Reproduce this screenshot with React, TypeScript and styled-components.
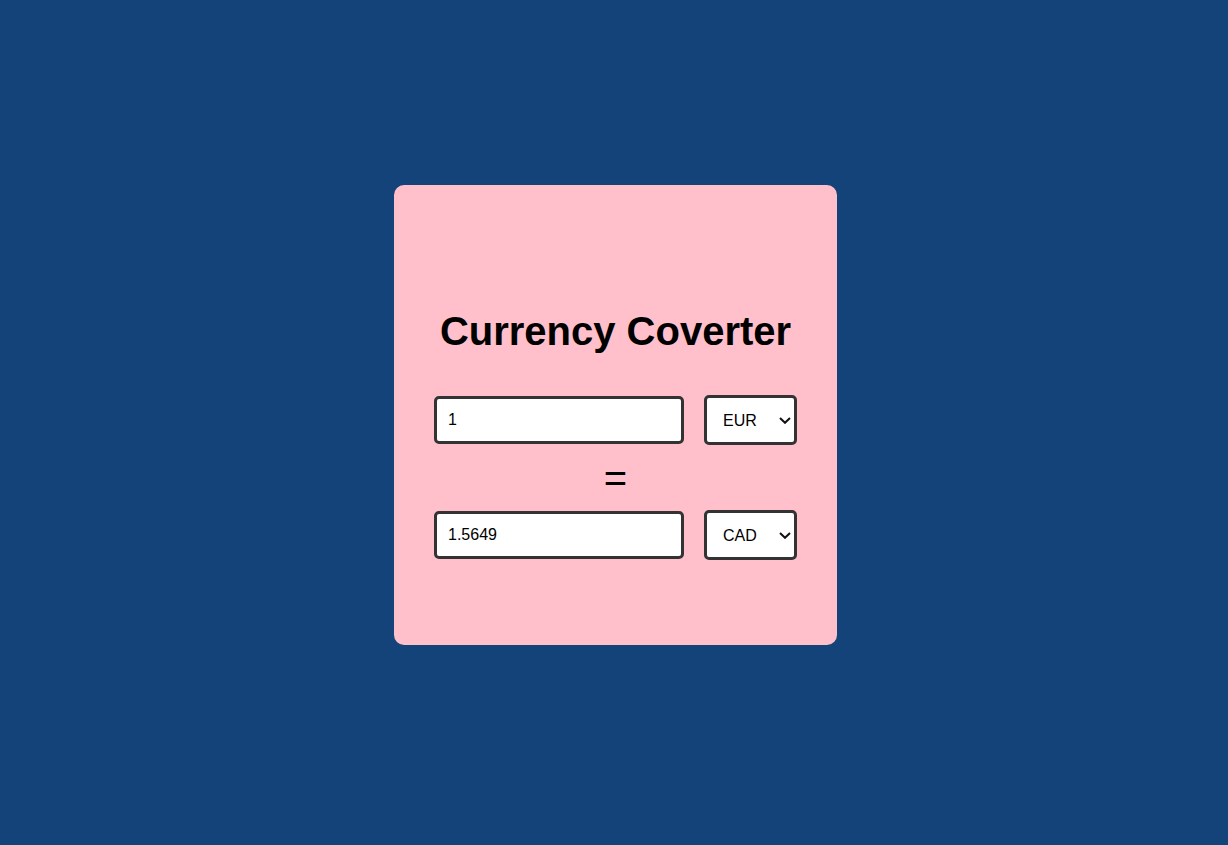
import React, { useState } from "react";
import styled, { createGlobalStyle } from "styled-components";

const GlobalStyle = createGlobalStyle`
  html, body {
    margin: 0;
    padding: 0;
    background: #134379;
    font-family: "Liberation Sans", Arial, sans-serif;
  }
`;

const Page = styled.div`
  min-height: 845px;
  box-sizing: border-box;
  padding: 185px 0 0 394px;
`;

const Card = styled.div`
  width: 443px;
  height: 460px;
  box-sizing: border-box;
  background: #ffc0cb;
  border-radius: 10px;
  padding: 123px 40px 0;
  display: flex;
  flex-direction: column;
`;

const Title = styled.h1`
  margin: 0;
  font-size: 40px;
  line-height: 46px;
  font-weight: 700;
  text-align: center;
  color: #000;
`;

const Row = styled.div<{ $top?: number }>`
  display: flex;
  gap: 20px;
  align-items: center;
  margin-top: ${(p) => p.$top ?? 0}px;
`;

const AmountInput = styled.input`
  width: 250px;
  height: 48px;
  box-sizing: border-box;
  border: 3px solid #333;
  border-radius: 5px;
  padding: 0 11px;
  font-family: "Liberation Sans", Arial, sans-serif;
  font-size: 16px;
  color: #000;
  background: #fff;
  outline: none;
`;

const SelectWrap = styled.div`
  position: relative;
  width: 93px;
  height: 50px;
`;

const CurrencySelect = styled.select`
  appearance: none;
  -webkit-appearance: none;
  width: 93px;
  height: 50px;
  box-sizing: border-box;
  border: 3px solid #333;
  border-radius: 5px;
  padding: 0 20px 0 16px;
  font-family: "Liberation Sans", Arial, sans-serif;
  font-size: 16px;
  color: #000;
  background: #fff;
  outline: none;
`;

const Chevron = styled.svg`
  position: absolute;
  right: 6px;
  top: 22px;
  width: 12px;
  height: 7px;
  pointer-events: none;
`;

const Equals = styled.div`
  height: 65px;
  display: flex;
  align-items: center;
  justify-content: center;
  font-size: 40px;
  line-height: 46px;
  color: #000;
`;

const currencies = ["EUR", "CAD", "USD", "GBP", "JPY"];

function CurrencyPicker({ value, onChange }: { value: string; onChange: (v: string) => void }) {
  return (
    <SelectWrap>
      <CurrencySelect value={value} onChange={(e) => onChange(e.target.value)}>
        {currencies.map((c) => (
          <option key={c} value={c}>{c}</option>
        ))}
      </CurrencySelect>
      <Chevron viewBox="0 0 12 7" fill="none">
        <path d="M1 1 L6 5.8 L11 1" stroke="#111" strokeWidth="2" strokeLinecap="butt" strokeLinejoin="miter" />
      </Chevron>
    </SelectWrap>
  );
}

export default function App() {
  const [from, setFrom] = useState("EUR");
  const [to, setTo] = useState("CAD");
  const [amount, setAmount] = useState("1");
  return (
    <>
      <GlobalStyle />
      <Page>
        <Card>
          <Title>Currency Coverter</Title>
          <Row $top={41}>
            <AmountInput value={amount} onChange={(e) => setAmount(e.target.value)} />
            <CurrencyPicker value={from} onChange={setFrom} />
          </Row>
          <Equals>=</Equals>
          <Row>
            <AmountInput value="1.5649" readOnly />
            <CurrencyPicker value={to} onChange={setTo} />
          </Row>
        </Card>
      </Page>
    </>
  );
}
